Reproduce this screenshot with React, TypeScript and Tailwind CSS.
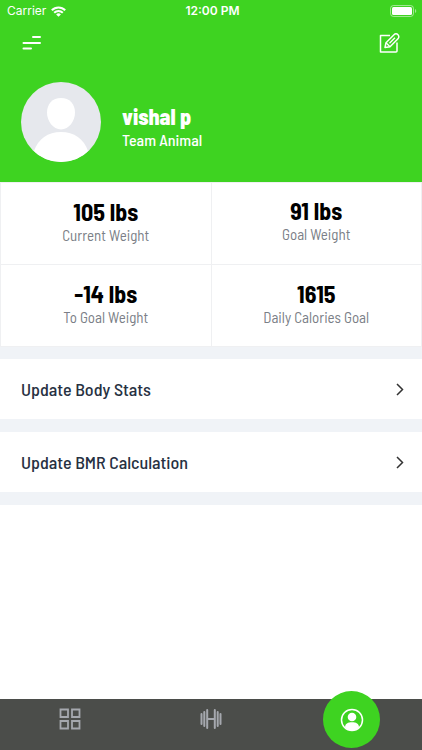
import React from "react";

const bodyFont = "font-['Barlow_Semi_Condensed','Roboto_Condensed','Liberation_Sans_Narrow','Roboto',sans-serif]";

const stats = [
  { value: "105 lbs", label: "Current Weight", pad: "pt-[15px]" },
  { value: "91 lbs", label: "Goal Weight", pad: "pt-[14px]" },
  { value: "-14 lbs", label: "To Goal Weight", pad: "pt-[15px]" },
  { value: "1615", label: "Daily Calories Goal", pad: "pt-[15px]" },
];

const actions = ["Update Body Stats", "Update BMR Calculation"];

function StatusBar() {
  return (
    <div className="grid h-[22px] grid-cols-3 items-center pl-[7px] pr-1 font-['Inter',sans-serif] text-xs text-white">
      <div className="flex items-center gap-[5px]">
        <span>Carrier</span>
        <svg width="15" height="11" viewBox="0 0 15 11" fill="none" stroke="currentColor" strokeWidth="2" aria-hidden="true">
          <path d="M0.8 4.3a9.4 9.4 0 0 1 13.4 0" />
          <path d="M3.2 6.7a6 6 0 0 1 8.6 0" />
          <path d="M7.5 10.8 5.1 8.4a3.4 3.4 0 0 1 4.8 0Z" fill="currentColor" stroke="none" />
        </svg>
      </div>
      <span className="text-center font-semibold">12:00 PM</span>
      <svg className="justify-self-end" width="28" height="12" viewBox="0 0 28 12" aria-hidden="true">
        <rect x="0.5" y="0.5" width="23" height="11" rx="3" fill="none" stroke="#fff" strokeOpacity="0.5" />
        <rect x="2" y="2" width="20" height="8" rx="1.5" fill="#fff" />
        <path d="M25 4v4a2.2 2.2 0 0 0 0-4Z" fill="#fff" fillOpacity="0.5" />
      </svg>
    </div>
  );
}

function Avatar() {
  return (
    <svg width="80" height="80" viewBox="0 0 80 80" role="img" aria-label="Profile picture">
      <defs>
        <clipPath id="avatar-clip">
          <circle cx="40" cy="40" r="40" />
        </clipPath>
      </defs>
      <g clipPath="url(#avatar-clip)">
        <rect width="80" height="80" fill="#e6e8ed" />
        <path d="M40 16c8.600 0 14 6 14 14.500C54 39 48 47.500 40 47.500S26 39 26 30.500C26 22 31.400 16 40 16Z" fill="#fff" />
        <path d="M13 69C17 57 27 50 40 50s23 7 27 19l-4 11H17Z" fill="#fff" />
      </g>
    </svg>
  );
}

export default function App() {
  return (
    <div className={`flex min-h-screen flex-col bg-white ${bodyFont}`}>
      <header className="bg-[#3ed321] pb-5 text-white">
        <StatusBar />
        <div className="flex h-[42px] items-center justify-between px-[22px]">
          <button type="button" aria-label="Menu">
            <svg width="20" height="16" viewBox="0 0 20 16" stroke="currentColor" strokeWidth="2" strokeLinecap="round" aria-hidden="true">
              <path d="M11 2h7M1.500 8H18M1.500 13.500H9" />
            </svg>
          </button>
          <button type="button" aria-label="Edit profile">
            <svg width="21" height="21" viewBox="0 0 21 21" fill="none" stroke="currentColor" strokeWidth="1.500" strokeLinejoin="round" aria-hidden="true">
              <path d="M11 2.500H1.500v16.500h15.500q1 0 1-1V9.500" />
              <path d="m6 14.500 1-4.800 8-8a2.700 2.700 0 0 1 4 4l-8 8Z" />
              <path d="m7 9.700 4 4M10.500 10.200l5.500-5.500" strokeWidth="1.300" />
            </svg>
          </button>
        </div>
        <div className="flex items-center gap-[21px] px-[21px] pt-[18px]">
          <Avatar />
          <div className="pt-3">
            <h1 className="text-[22px] leading-6 font-extrabold">vishal p</h1>
            <p className="text-base leading-6 font-medium">Team Animal</p>
          </div>
        </div>
      </header>

      <main className="flex-1">
        <dl className="grid grid-cols-2 border-t border-l border-[#eff0f2]">
          {stats.map((s) => (
            <div key={s.label} className={`flex h-[82px] flex-col-reverse justify-end border-r border-b border-[#eff0f2] text-center ${s.pad}`}>
              <dt className="text-[15px] leading-[18px] text-[#7b7f87]">{s.label}</dt>
              <dd className="text-2xl leading-7 font-bold text-black">{s.value}</dd>
            </div>
          ))}
        </dl>
        <div className="flex flex-col gap-[13px] bg-[#f0f3f7] pt-3 pb-[13px]">
          {actions.map((label) => (
            <button key={label} type="button" className="flex h-[60px] items-center justify-between bg-white pr-[17px] pl-[21px] text-left text-lg font-medium text-[#273142]">
              {label}
              <svg width="10" height="14" viewBox="0 0 10 14" fill="none" stroke="#333" strokeWidth="1.500" aria-hidden="true">
                <path d="m2 2 5.500 5.500L2 13" />
              </svg>
            </button>
          ))}
        </div>
      </main>

      <nav className="grid h-[51px] grid-cols-3 bg-[#4b4d4a] text-[#a5a8ae]" aria-label="Main">
        <button type="button" className="flex items-center justify-center pb-[11px]" aria-label="Dashboard">
          <svg width="22" height="22" viewBox="0 0 22 22" fill="none" stroke="currentColor" strokeWidth="1.800" aria-hidden="true">
            <path d="M1.500 1.500H9V9H1.500ZM13 1.500h7.500V9H13ZM1.500 13H9v7.500H1.500ZM13 13h7.500v7.500H13Z" />
          </svg>
        </button>
        <button type="button" className="flex items-center justify-center pb-[11px]" aria-label="Workouts">
          <svg width="22" height="20" viewBox="0 0 22 20" fill="none" stroke="currentColor" strokeWidth="2" strokeLinecap="round" aria-hidden="true">
            <path d="M1.500 5v10M4.300 3v14M7.200 1v18M14.800 1v18M17.700 3v14M20.500 5v10M7.200 10h7.600" />
          </svg>
        </button>
        <button type="button" className="-mt-2 flex size-[57px] items-center justify-center justify-self-center rounded-full bg-[#3ed321] text-white" aria-label="Profile">
          <svg width="24" height="24" viewBox="0 0 24 24" aria-hidden="true">
            <circle cx="12" cy="12" r="10.500" fill="none" stroke="currentColor" strokeWidth="1.500" />
            <circle cx="12" cy="9" r="4.300" fill="currentColor" />
            <path d="M5 19.500c0-4 3-5.300 7-5.300s7 1.300 7 5.300q-3 3-7 3t-7-3Z" fill="currentColor" />
          </svg>
        </button>
      </nav>
    </div>
  );
}
